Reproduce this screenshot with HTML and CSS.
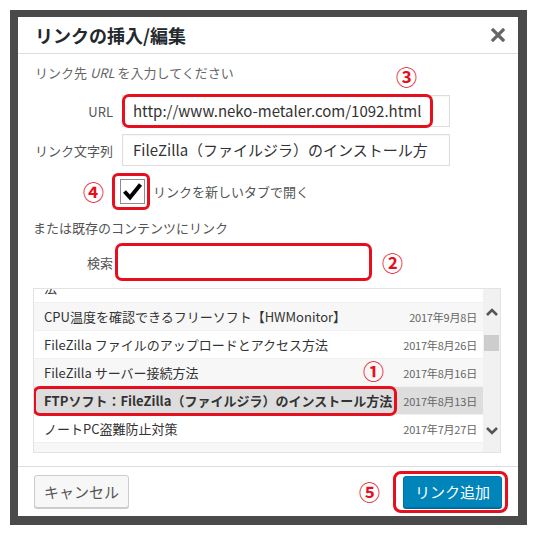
FILE: index.html
```html
<!DOCTYPE html>
<html lang="ja">
<head>
    <meta charset="UTF-8">
    <title>リンクの挿入/編集</title>
    <link rel="stylesheet" href="styles.css">
</head>
<body>
    <div class="backdrop">
        <div class="dialog">
            <!-- Header -->
            <div class="dialog-head">
                <h1>リンクの挿入/編集</h1>
                <svg class="close" width="14" height="14" viewBox="0 0 14 14">
                    <path d="M2 2L12 12M12 2L2 12" stroke="#666" stroke-width="3.2" stroke-linecap="square"/>
                </svg>
            </div>

            <!-- Body -->
            <div class="dialog-body">
                <p class="hint">リンク先 <em>URL</em> を入力してください<span class="mark mark-url">③</span></p>

                <div class="field">
                    <label>URL</label>
                    <div class="input-wrap">
                        <div class="text-input">http://www.neko-metaler.com/1092.html</div>
                        <span class="ring ring-url"></span>
                    </div>
                </div>

                <div class="field">
                    <label>リンク文字列</label>
                    <div class="input-wrap">
                        <div class="text-input">FileZilla（ファイルジラ）のインストール方</div>
                    </div>
                </div>

                <div class="check-row">
                    <span class="mark">④</span>
                    <span class="check-ring">
                        <svg class="checkbox" width="25" height="25" viewBox="0 0 25 25">
                            <rect x="0.5" y="0.5" width="24" height="24" fill="#fff" stroke="#8c8c8c"/>
                            <path d="M4.5 12.5L10 18.5L20.5 5.5" fill="none" stroke="#000" stroke-width="4" stroke-linejoin="miter"/>
                        </svg>
                    </span>
                    <span class="check-label">リンクを新しいタブで開く</span>
                </div>

                <p class="sub">または既存のコンテンツにリンク</p>

                <div class="field search-field">
                    <label>検索</label>
                    <div class="search-input"></div>
                    <span class="mark">②</span>
                </div>

                <div class="results">
                    <div class="results-view">
                        <ul class="results-list">
                            <li class="first"><span class="title">法</span><span class="date"></span></li>
                            <li class="alt"><span class="title">CPU温度を確認できるフリーソフト【HWMonitor】</span><span class="date">2017年9月8日</span></li>
                            <li><span class="title">FileZilla ファイルのアップロードとアクセス方法</span><span class="date">2017年8月26日</span></li>
                            <li class="alt"><span class="title">FileZilla サーバー接続方法</span><span class="date">2017年8月16日</span><span class="mark mark-list">①</span></li>
                            <li class="selected"><span class="title">FTPソフト：FileZilla（ファイルジラ）のインストール方法</span><span class="date">2017年8月13日</span><span class="ring ring-row"></span></li>
                            <li><span class="title">ノートPC盗難防止対策</span><span class="date">2017年7月27日</span></li>
                            <li class="alt"></li>
                        </ul>
                    </div>
                    <div class="scrollbar">
                        <svg width="14" height="10" viewBox="0 0 14 10"><path d="M2 8L7 3L12 8" fill="none" stroke="#555" stroke-width="2.6"/></svg>
                        <span class="thumb"></span>
                        <span class="spacer"></span>
                        <svg width="14" height="10" viewBox="0 0 14 10"><path d="M2 2L7 7L12 2" fill="none" stroke="#555" stroke-width="2.6"/></svg>
                    </div>
                </div>
            </div>

            <!-- Footer -->
            <div class="dialog-foot">
                <button class="btn-cancel" type="button">キャンセル</button>
                <span class="mark mark-foot">⑤</span>
                <span class="submit-ring">
                    <button class="btn-primary" type="button">リンク追加</button>
                </span>
            </div>
        </div>
    </div>
</body>
</html>
```

FILE: styles.css
```css
/* Basic Reset */
* {
    margin: 0;
    padding: 0;
    box-sizing: border-box;
}

body {
    font-family: 'Noto Sans CJK JP', 'Noto Sans', sans-serif;
    background-color: #fff;
    color: #444;
    width: 537px;
    height: 536px;
}

.backdrop {
    margin: 10px;
    width: 517px;
    height: 515px;
    background-color: #4a4a4a;
    padding: 7px 10px 9px 8px;
}

.dialog {
    width: 500px;
    height: 499px;
    background-color: #fff;
    display: flex;
    flex-direction: column;
}

.dialog-head {
    height: 37px;
    border-bottom: 1px solid #ddd;
    display: flex;
    align-items: center;
    justify-content: space-between;
    padding: 0 13px 0 17px;
}

.dialog-head h1 {
    font-size: 18px;
    font-weight: bold;
    color: #23282d;
    line-height: 1;
}

.dialog-body {
    flex: 1;
    padding: 9px 17px 0 15px;
}

.hint {
    position: relative;
    font-size: 13px;
    line-height: 20px;
    color: #666;
    padding-left: 2px;
}

.hint em {
    font-style: italic;
}

.mark {
    color: #e60f1e;
    font-size: 21px;
    font-weight: bold;
    line-height: 1;
}

.mark-url {
    position: absolute;
    left: 363px;
    top: 3px;
}

.field {
    display: flex;
    align-items: center;
    gap: 9px;
    margin-top: 12px;
}

.field + .field {
    margin-top: 7px;
}

.field label {
    width: 80px;
    text-align: right;
    font-size: 13px;
    color: #555;
}

.input-wrap {
    position: relative;
}

.text-input {
    width: 328px;
    height: 32px;
    border: 1px solid #ddd;
    box-shadow: inset 0 1px 2px rgba(0, 0, 0, 0.04);
    font-size: 15px;
    line-height: 30px;
    padding-left: 10px;
    color: #333;
    white-space: nowrap;
}

.ring {
    position: absolute;
    border: 3px solid #e60f1e;
    border-radius: 7px;
}

.ring-url {
    left: 0;
    top: -1px;
    width: 311px;
    height: 34px;
}

.check-row {
    display: flex;
    align-items: center;
    margin-top: 7px;
    padding-left: 50px;
}

.check-row .mark {
    width: 21px;
    margin-right: 8px;
}

.check-ring {
    width: 38px;
    height: 37px;
    border: 3px solid #e60f1e;
    border-radius: 6px;
    display: flex;
    align-items: center;
    padding-left: 5px;
}

.checkbox {
    display: block;
}

.check-label {
    margin-left: 3px;
    font-size: 13px;
    color: #555;
}

.sub {
    margin-top: 8px;
    font-size: 13px;
    line-height: 20px;
    color: #555;
}

.search-field {
    margin-top: 5px;
    gap: 2px;
}

.search-input {
    width: 257px;
    height: 38px;
    border: 3px solid #e60f1e;
    border-radius: 7px;
}

.search-field .mark {
    margin-left: 8px;
}

.results {
    margin-top: 7px;
    height: 165px;
    border: 1px solid #e3e3e3;
    display: flex;
}

.results-view {
    flex: 1;
    overflow: hidden;
}

.results-list {
    list-style: none;
    margin-top: -14px;
}

.results-list li {
    position: relative;
    height: 28px;
    border-bottom: 1px solid #f0f0f0;
    display: flex;
    align-items: center;
    justify-content: space-between;
    padding: 0 6px 0 10px;
    font-size: 13px;
    color: #333;
}

.results-list li.first {
    align-items: flex-end;
    padding-bottom: 5px;
}

.results-list li.alt {
    background-color: #f7f7f7;
}

.results-list li.selected {
    background-color: #ddd;
}

.results-list li.selected .title {
    font-weight: bold;
}

.date {
    font-size: 11px;
    letter-spacing: -0.2px;
    color: #666;
}

.mark-list {
    position: absolute;
    left: 329px;
    top: 1px;
}

.ring-row {
    left: -1px;
    top: -1px;
    width: 364px;
    height: 30px;
}

.scrollbar {
    width: 17px;
    background-color: #f1f1f1;
    display: flex;
    flex-direction: column;
    align-items: center;
    padding: 18px 0 16px;
}

.thumb {
    width: 15px;
    height: 16px;
    margin-top: 18px;
    background-color: #cdcdcd;
}

.spacer {
    flex: 1;
}

.dialog-foot {
    height: 50px;
    border-top: 1px solid #ddd;
    display: flex;
    align-items: center;
    padding: 0 10px 0 16px;
}

.btn-cancel {
    width: 95px;
    height: 33px;
    border: 1px solid #ccc;
    border-radius: 3px;
    background-color: #f7f7f7;
    box-shadow: 0 1px 0 #ccc;
    font-family: inherit;
    font-size: 15px;
    color: #555;
}

.mark-foot {
    margin-left: auto;
    margin-right: 13px;
}

.submit-ring {
    border: 3px solid #e60f1e;
    border-radius: 8px;
    padding: 2px 3px 2px 7px;
    display: flex;
}

.btn-primary {
    width: 99px;
    height: 32px;
    border: 1px solid #0073aa;
    border-radius: 3px;
    background-color: #0085ba;
    box-shadow: 0 1px 0 #006799;
    font-family: inherit;
    font-size: 15px;
    color: #fff;
}
```
